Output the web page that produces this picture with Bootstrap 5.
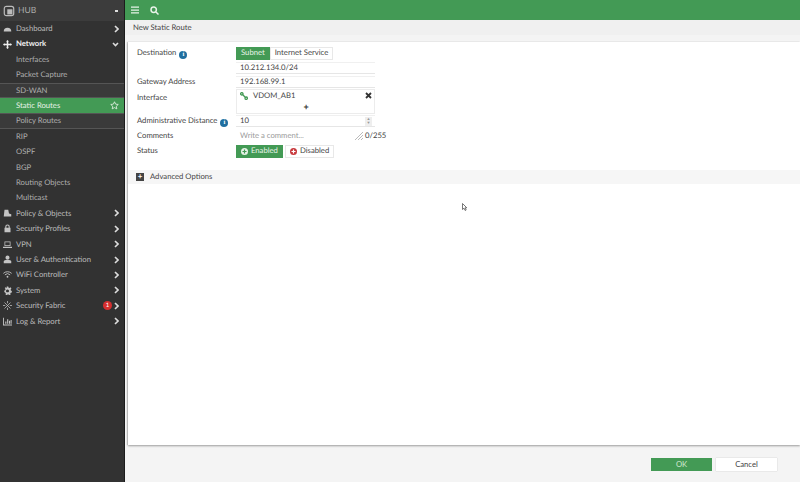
<!DOCTYPE html>
<html lang="en"><head><meta charset="utf-8"><title>New Static Route</title>
<link href="https://cdn.jsdelivr.net/npm/bootstrap@5.3.0/dist/css/bootstrap.min.css" rel="stylesheet">
<style>
html,body{height:482px;overflow:hidden}
body{font-family:Lato,"Liberation Sans",sans-serif;font-size:7.700px;color:#444;background:#f4f4f4;line-height:1.2;text-rendering:geometricPrecision}
.fg-shell{width:800px;height:482px}
.fg-side{width:125px;height:482px;background:#323232;color:#bdbdbd;border-right:1px solid #1c1c1c;flex:none}
.fg-hub{height:21px;background:#3c3c3c;padding:0 5px 0 3px;color:#aaa;font-size:8.500px}
.fg-item{height:15.400px;padding-left:3px;padding-right:5px;flex:none}
.fg-ico{width:9px;height:9px;flex:none;fill:#c4c4c4}
.fg-text{margin-left:4px;flex:1;white-space:nowrap}
.fg-sub{padding-left:16px}
.fg-sub .fg-text{margin-left:0;color:#b0b0b0}
.fg-group{background:#3a3a3a;border-top:1px solid #555;border-bottom:1px solid #555}
.fg-active{background:#439a55}
.fg-bold{font-weight:700;color:#eee}
.fg-chev{width:5px;height:8px;fill:none;stroke:#ddd;stroke-width:1.600;flex:none}
.fg-main{min-width:0}
.fg-top{height:20px;background:#439a55;padding-left:6px;gap:11px}
.fg-title{height:15px;background:#f0f0f0;padding-left:8px;color:#444}
.fg-panel{margin:7px 0 0 3px;height:403px;background:#fff;box-shadow:0 1px 2px rgba(0,0,0,.35),-1px 0 1px rgba(0,0,0,.15);padding-top:4px}
.fg-row{padding-left:9px;height:14px;flex:none}
.fg-gap{margin-top:1px}
.fg-label{width:99px;flex:none;white-space:nowrap}
.fg-info{display:inline-block;width:8px;height:8px;border-radius:50%;background:#1f6e9f;color:#fff;font-size:6.500px;line-height:8px;text-align:center;font-weight:700;margin-left:3px;font-family:"Liberation Serif",serif;vertical-align:-1px}
.fg-field{width:139px;height:12px;background:#fff;border-bottom:1px solid #e6e6e6;border-top:1px solid #f0f0f0;padding-left:4px;color:#444}
.fg-seg{height:13px;padding:0 4px;border:1px solid #e8e8e8;background:#fff;color:#444}
.fg-on{background:#439a55;color:#eaf5ea;border-color:#439a55}
.fg-box{width:139px;height:25px;border:1px solid #ececec;padding:1px 2px 0 3px}
.fg-spin{width:7px;height:9px;background:#eee;color:#999;font-size:4px;line-height:4.500px;text-align:center}
.fg-area{width:119px;height:13px;color:#999;padding-left:4px}
.fg-adv{height:14px;background:#f6f6f6;margin-top:12px;padding-left:8px;color:#444;gap:6px}
.fg-plus{width:8px;height:8px;background:#444;color:#fff;font-size:8px;line-height:7px;text-align:center;font-weight:700}
.fg-foot{height:37px;padding-right:23px;gap:4px;padding-top:1px}
.fg-btn{width:61px;height:13px;padding:0;border:0;border-radius:0;font-size:7.700px;line-height:13px;background:#439a55;color:#cfe8cf}
.fg-btn:hover{background:#439a55;color:#cfe8cf}
.fg-cancel,.fg-cancel:hover{background:#fff;color:#444;box-shadow:0 0 1px rgba(0,0,0,.25)}
.fg-cursor{position:absolute;left:462px;top:203px;width:5px;height:8px;fill:#fff;stroke:#555;stroke-width:.8}
.fg-dot{width:7px;height:7px;flex:none;margin-right:3px}
.fg-badge{width:9px;height:9px;border-radius:50%;background:#d62f2f;color:#fff;font-size:6px;line-height:9px;text-align:center;margin-right:2px}
</style></head><body>
<div class="fg-shell d-flex">
<nav class="fg-side d-flex flex-column">
 <div class="fg-hub d-flex align-items-center"><svg class="fg-ico" style="width:12px;height:12px" viewBox="0 0 14 14"><rect x="1.500" y="1.500" width="11" height="11" rx="2.500" fill="none" stroke="#bbb" stroke-width="1.400"/><rect x="5" y="5" width="6" height="6" fill="#bbb"/></svg><span class="fg-text" style="margin-left:3px">HUB</span><span style="width:3px;height:2px;background:#ddd;margin-right:1px"></span></div>
 <div class="fg-item d-flex align-items-center"><svg class="fg-ico" viewBox="0 0 12 12"><path d="M1 10a5 5 0 1 1 10 0z"/></svg><span class="fg-text">Dashboard</span><svg class="fg-chev" viewBox="0 0 5 8"><path d="M1 1l3 3-3 3"/></svg></div>
 <div class="fg-item d-flex align-items-center fg-bold"><svg class="fg-ico" viewBox="0 0 12 12"><path d="M6 0l2 2H7v3h3V4l2 2-2 2V7H7v3h1l-2 2-2-2h1V7H2v1L0 6l2-2v1h3V2H4z" fill="#eee"/></svg><span class="fg-text">Network</span><svg class="fg-chev" style="width:7px;height:5px" viewBox="0 0 7 5"><path d="M1 1l2.500 2.500L6 1"/></svg></div>
 <div class="fg-item fg-sub d-flex align-items-center"><span class="fg-text">Interfaces</span></div>
 <div class="fg-item fg-sub d-flex align-items-center"><span class="fg-text">Packet Capture</span></div>
 <div class="fg-item fg-sub d-flex align-items-center fg-group"><span class="fg-text">SD-WAN</span></div>
 <div class="fg-item fg-sub d-flex align-items-center fg-active"><span class="fg-text" style="color:#e8f3e8">Static Routes</span><svg width="9" height="9" viewBox="0 0 12 12" fill="none" stroke="#e8f3e8" stroke-width="1.100"><path d="M6 1l1.500 3.200 3.500.4-2.600 2.400.7 3.500L6 8.800l-3.100 1.700.7-3.500L1 4.600l3.500-.4z"/></svg></div>
 <div class="fg-item fg-sub d-flex align-items-center fg-group"><span class="fg-text">Policy Routes</span></div>
 <div class="fg-item fg-sub d-flex align-items-center"><span class="fg-text">RIP</span></div>
 <div class="fg-item fg-sub d-flex align-items-center"><span class="fg-text">OSPF</span></div>
 <div class="fg-item fg-sub d-flex align-items-center"><span class="fg-text">BGP</span></div>
 <div class="fg-item fg-sub d-flex align-items-center"><span class="fg-text">Routing Objects</span></div>
 <div class="fg-item fg-sub d-flex align-items-center"><span class="fg-text">Multicast</span></div>
 <div class="fg-item d-flex align-items-center"><svg class="fg-ico" viewBox="0 0 12 12"><path d="M2 1h5l1 5 3 1v3H1z"/></svg><span class="fg-text">Policy &amp; Objects</span><svg class="fg-chev" viewBox="0 0 5 8"><path d="M1 1l3 3-3 3"/></svg></div>
 <div class="fg-item d-flex align-items-center"><svg class="fg-ico" viewBox="0 0 12 12"><path d="M2 5h1V3.500a3 3 0 0 1 6 0V5h1v6H2zM4.500 5h3V3.500a1.500 1.500 0 0 0-3 0z"/></svg><span class="fg-text">Security Profiles</span><svg class="fg-chev" viewBox="0 0 5 8"><path d="M1 1l3 3-3 3"/></svg></div>
 <div class="fg-item d-flex align-items-center"><svg class="fg-ico" viewBox="0 0 12 12"><path d="M2 2h8v6H2zM3 3v4h6V3zM0 9h12v1.500H0z"/></svg><span class="fg-text">VPN</span><svg class="fg-chev" viewBox="0 0 5 8"><path d="M1 1l3 3-3 3"/></svg></div>
 <div class="fg-item d-flex align-items-center"><svg class="fg-ico" viewBox="0 0 12 12"><circle cx="6" cy="3.500" r="2.700"/><path d="M1 11V8.500C1 7 3 6.500 6 6.500s5 .5 5 2V11z"/></svg><span class="fg-text">User &amp; Authentication</span><svg class="fg-chev" viewBox="0 0 5 8"><path d="M1 1l3 3-3 3"/></svg></div>
 <div class="fg-item d-flex align-items-center"><svg class="fg-ico" viewBox="0 0 12 12" fill="none"><path d="M.5 4.500a8 8 0 0 1 11 0M2.500 6.500a5 5 0 0 1 7 0" fill="none" stroke="#c4c4c4" stroke-width="1.200"/><circle cx="6" cy="9" r="1.200"/></svg><span class="fg-text">WiFi Controller</span><svg class="fg-chev" viewBox="0 0 5 8"><path d="M1 1l3 3-3 3"/></svg></div>
 <div class="fg-item d-flex align-items-center"><svg class="fg-ico" viewBox="0 0 12 12"><path fill-rule="evenodd" d="M5 .5h2l.3 1.500 1.300.6L10 1.800l1.200 1.500-1 1.200.3 1.500 1.300.5v2l-1.400.4-.7 1.200.5 1.300-1.700.9-1-1.100H6l-1 1.100-1.700-.9.5-1.300-.7-1.200L1.700 8V6l1.300-.5.300-1.500-1-1.200L3.500 1.800l1.400.8zM6 4.500a2 2 0 1 0 .01 0z"/></svg><span class="fg-text">System</span><svg class="fg-chev" viewBox="0 0 5 8"><path d="M1 1l3 3-3 3"/></svg></div>
 <div class="fg-item d-flex align-items-center"><svg class="fg-ico" viewBox="0 0 12 12" fill="none" stroke="#c4c4c4" stroke-width="1"><path d="M2 2l8 8M10 2l-8 8M6 0v3M6 9v3M0 6h3M9 6h3"/></svg><span class="fg-text">Security Fabric</span><span class="fg-badge">1</span><svg class="fg-chev" viewBox="0 0 5 8"><path d="M1 1l3 3-3 3"/></svg></div>
 <div class="fg-item d-flex align-items-center"><svg class="fg-ico" viewBox="0 0 12 12"><path d="M0 1h1.200v9H12v1.200H0zM3 6h1.500v3H3zM5.500 3h1.500v6H5.500zM8 5h1.500v4H8zM10.200 4h1.300v5h-1.300z"/></svg><span class="fg-text">Log &amp; Report</span><svg class="fg-chev" viewBox="0 0 5 8"><path d="M1 1l3 3-3 3"/></svg></div>
</nav>
<main class="fg-main flex-grow-1 d-flex flex-column">
 <div class="fg-top d-flex align-items-center">
  <svg width="8" height="8" viewBox="0 0 8 8" fill="#e8f3e8"><path d="M0 .5h8v1.300H0zM0 3.400h8v1.300H0zM0 6.200h8v1.300H0z"/></svg>
  <svg width="9" height="9" viewBox="0 0 9 9" fill="none" stroke="#e8f3e8" stroke-width="1.500"><circle cx="3.700" cy="3.700" r="2.700"/><path d="M5.700 5.700L8.500 8.500"/></svg>
 </div>
 <div class="fg-title d-flex align-items-center">New Static Route</div>
 <div class="fg-panel d-flex flex-column">
  <div class="fg-row d-flex align-items-center"><span class="fg-label">Destination<span class="fg-info">i</span></span><span class="fg-seg fg-on d-flex align-items-center">Subnet</span><span class="fg-seg d-flex align-items-center">Internet Service</span></div>
  <div class="fg-row fg-gap d-flex align-items-center"><span class="fg-label"></span><span class="fg-field d-flex align-items-center">10.212.134.0/24</span></div>
  <div class="fg-row d-flex align-items-center"><span class="fg-label">Gateway Address</span><span class="fg-field d-flex align-items-center">192.168.99.1</span></div>
  <div class="d-flex" style="padding-left:9px;height:25px"><span class="fg-label pt-1">Interface</span><div class="fg-box d-flex flex-column"><div class="d-flex align-items-center"><svg width="8" height="8" viewBox="0 0 8 8" fill="none" stroke="#439a55" stroke-width="1.300" style="margin-right:5px"><circle cx="1.800" cy="1.800" r="1.200"/><circle cx="6.200" cy="6.200" r="1.200"/><path d="M2.800 2.800l2.400 2.400"/></svg><span class="flex-grow-1">VDOM_AB1</span><svg width="7" height="7" viewBox="0 0 7 7" stroke="#333" stroke-width="1.800"><path d="M1 1l5 5M6 1L1 6"/></svg></div><div class="text-center" style="color:#333;font-size:9px;line-height:10px;font-weight:700;margin-top:2px">+</div></div></div>
  <div class="fg-row d-flex align-items-center"><span class="fg-label">Administrative Distance<span class="fg-info">i</span></span><span class="fg-field d-flex align-items-center justify-content-between" style="padding-right:3px">10<span class="fg-spin">▲<br>▼</span></span></div>
  <div class="fg-row fg-gap d-flex align-items-center"><span class="fg-label">Comments</span><span class="fg-area d-flex align-items-center">Write a comment...</span><svg width="8" height="8" viewBox="0 0 8 8" stroke="#aaa" stroke-width=".8" style="margin-right:2px"><path d="M0 8L8 0M3 8l5-5M6 8l2-2"/></svg><span>0/255</span></div>
  <div class="fg-row fg-gap d-flex align-items-center"><span class="fg-label">Status</span><span class="fg-seg fg-on d-flex align-items-center"><svg class="fg-dot" viewBox="0 0 7 7"><circle cx="3.500" cy="3.500" r="3.500" fill="#e8f3e8"/><path d="M1.500 3.500h4M3.500 1.500v4" stroke="#439a55" stroke-width="1.200"/></svg>Enabled</span><span class="fg-seg d-flex align-items-center" style="margin-left:2px"><svg class="fg-dot" viewBox="0 0 7 7"><circle cx="3.500" cy="3.500" r="3.500" fill="#c8383c"/><path d="M1.500 3.500h4M3.500 1.500v4" stroke="#fff" stroke-width="1.200"/></svg>Disabled</span></div>
  <div class="fg-adv d-flex align-items-center"><span class="fg-plus">+</span><span>Advanced Options</span></div>
 </div>
 <div class="fg-foot d-flex align-items-center justify-content-end"><button type="button" class="btn fg-btn">OK</button><button type="button" class="btn fg-btn fg-cancel">Cancel</button></div>
</main>
</div>
<svg class="fg-cursor" viewBox="0 0 5 8"><path d="M.5.500v6l1.500-1.300L3.200 7.500l1-.5L3 4.800h1.800z"/></svg>
</body></html>
